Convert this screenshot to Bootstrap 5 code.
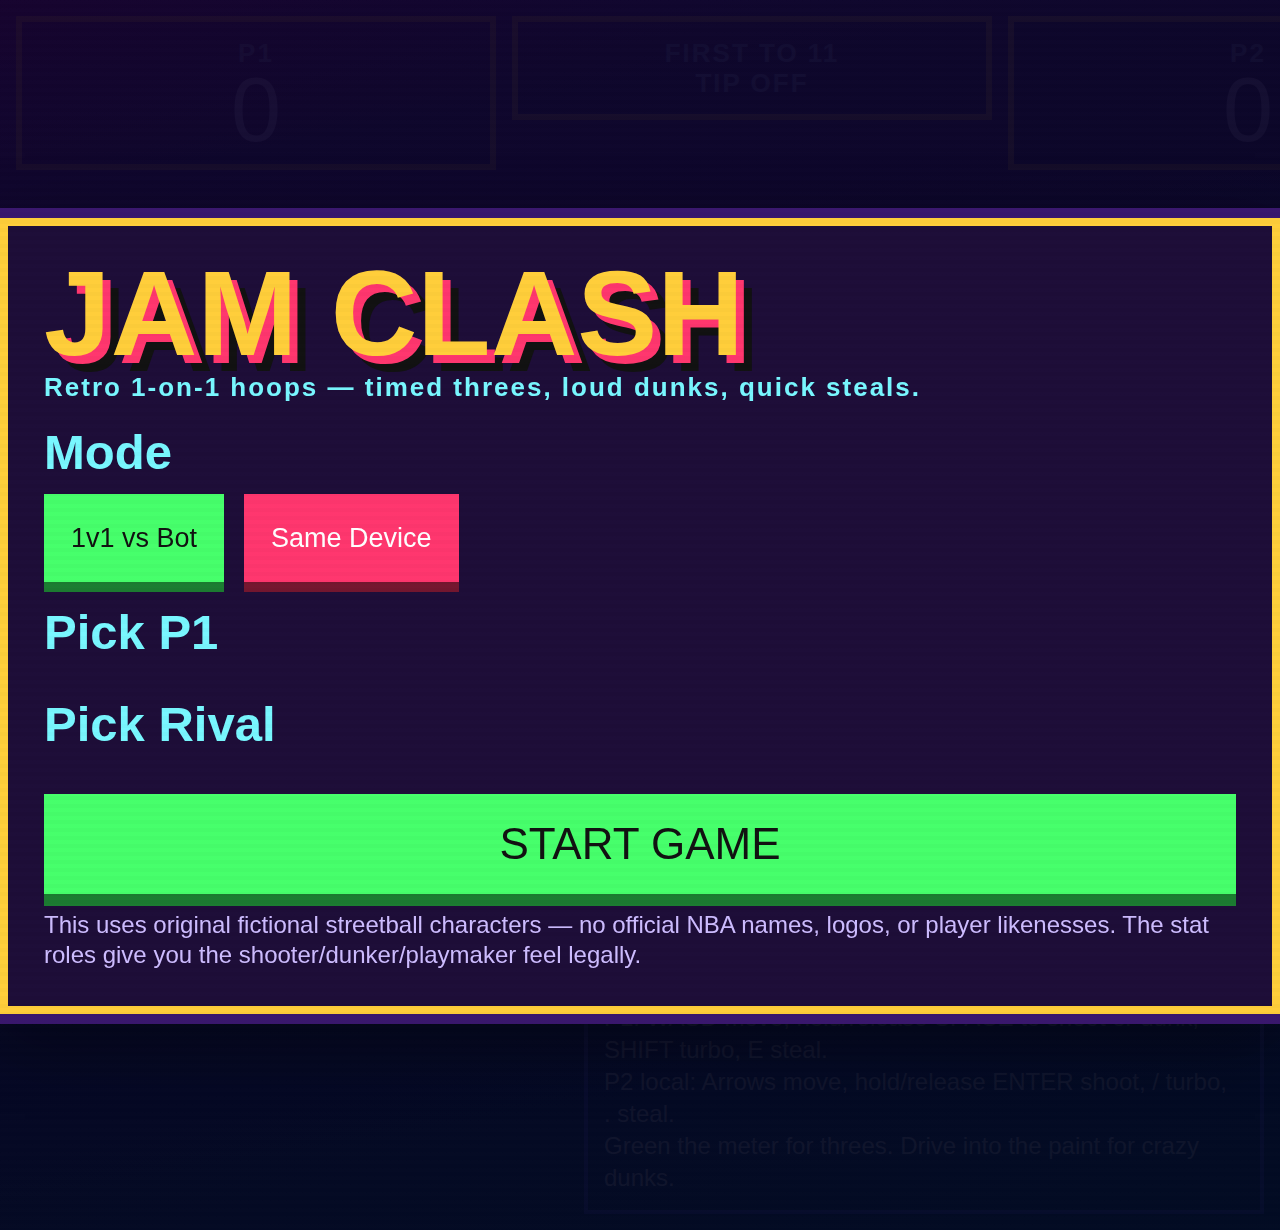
<!DOCTYPE html>
<html lang="en">
<head>
<meta charset="utf-8">
<meta name="viewport" content="width=device-width, initial-scale=1">
<title>Jam Clash</title>
<link href="https://cdn.jsdelivr.net/npm/bootstrap@5.3.0/dist/css/bootstrap.min.css" rel="stylesheet">
<style>
  :root { --gold:#ffce3a; --hot:#ff366e; --cyan:#78f7ff; --green:#46ff6b; --ink:#111; }
  body { font-family:"Liberation Sans", Arial, sans-serif; font-size:24px; line-height:30px; color:#fff;
    background:linear-gradient(170deg,#2b0a55 0%,#101040 45%,#03204c 100%); }
  .game { height:100vh; }
  .hud { display:grid; grid-template-columns:repeat(3,480px); gap:16px; align-items:start; }
  .hud-box { border:6px solid #94683c; font-size:26px; font-weight:900; letter-spacing:2px; background:#0a0a2a55; color:#5c64a0; }
  .hud-score { font-size:90px; line-height:84px; height:80px; font-weight:400; letter-spacing:0; color:#8470a8; }
  .help-box { width:680px; border:4px solid #4040b0; line-height:32px; color:#aab; }
  .menu-screen { padding-top:2px;
    background:linear-gradient(165deg, rgba(21,4,44,.93) 0%, rgba(14,7,43,.93) 14%, rgba(7,7,34,.93) 60%, rgba(2,10,32,.93) 100%); }
  .menu-panel { border:8px solid var(--gold); padding:36px; background:#1d0d38;
    box-shadow:0 0 0 10px #3a176e, 0 20px 70px rgba(0,0,0,.45); }
  .game-title { font-size:120px; line-height:102px; font-weight:900; color:var(--gold); margin-bottom:8px;
    text-shadow:8px 8px 0 var(--hot), 16px 16px 0 var(--ink); }
  .tagline { font-size:26px; font-weight:900; letter-spacing:2px; color:var(--cyan); }
  .pick-title { font-size:49px; line-height:60px; font-weight:900; color:var(--cyan); margin:20px 0 12px; }
  .mode-list { gap:20px; }
  .mode-btn { font-size:27px; height:88px; padding:0 27px; border-radius:0; border:0; }
  .go { background:var(--green); color:var(--ink); box-shadow:0 10px 0 #1b7c31; }
  .hot { background:var(--hot); color:#fff; box-shadow:0 10px 0 #74162f; }
  .start-btn { font-size:44px; height:100px; border-radius:0; border:0; margin-top:28px; box-shadow:0 12px 0 #1b7c31; }
  .legal { color:#cdbcff; }
  .scanlines { background:repeating-linear-gradient(to bottom, rgba(255,255,255,.004) 0 4px, rgba(0,0,0,.015) 4px 8px); z-index:1080; }
</style>
</head>
<body class="overflow-hidden">
<main class="game d-flex flex-column justify-content-between p-3">
  <section class="hud text-center">
    <div class="hud-box p-3">P1<div class="hud-score">0</div></div>
    <div class="hud-box p-3">FIRST TO 11<br>TIP OFF</div>
    <div class="hud-box p-3">P2<div class="hud-score">0</div></div>
  </section>
  <section class="help-box p-3 align-self-end">
    P1: WASD move, hold/release SPACE to shoot or dunk, SHIFT turbo, E steal.<br>
    P2 local: Arrows move, hold/release ENTER shoot, / turbo, .&nbsp;steal.<br>
    Green the meter for threes. Drive into the paint for crazy dunks.
  </section>
</main>
<div class="menu-screen position-fixed top-0 start-0 w-100 h-100 d-flex align-items-center">
  <section class="menu-panel w-100">
    <h1 class="game-title">JAM CLASH</h1>
    <p class="tagline mb-0">Retro 1-on-1 hoops — timed threes, loud dunks, quick steals.</p>
    <h2 class="pick-title">Mode</h2>
    <div class="mode-list d-flex">
      <button type="button" class="btn mode-btn go">1v1 vs Bot</button>
      <button type="button" class="btn mode-btn hot">Same Device</button>
    </div>
    <h2 class="pick-title">Pick P1</h2>
    <div class="d-grid"></div>
    <h2 class="pick-title">Pick Rival</h2>
    <div class="d-grid"></div>
    <button type="button" class="btn start-btn go w-100">START GAME</button>
    <p class="legal mt-3 mb-0">This uses original fictional streetball characters — no official NBA names, logos, or player likenesses. The stat roles give you the shooter/dunker/playmaker feel legally.</p>
  </section>
</div>
<div class="scanlines position-fixed top-0 start-0 w-100 h-100 pe-none"></div>
<script src="https://cdn.jsdelivr.net/npm/bootstrap@5.3.0/dist/js/bootstrap.bundle.min.js"></script>
</body>
</html>
